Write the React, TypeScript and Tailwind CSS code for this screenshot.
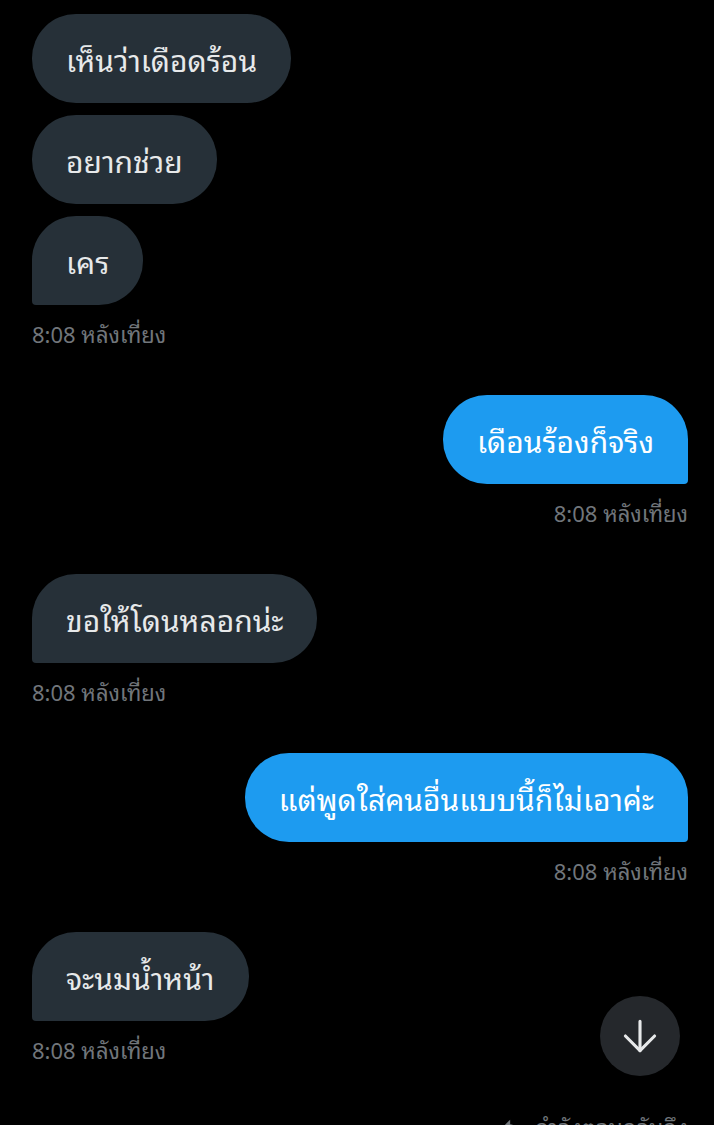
import { ArrowDown } from "lucide-react";

type Msg = { text: string };
type Group = { side: "in" | "out"; msgs: Msg[]; time: string };

const groups: Group[] = [
  {
    side: "in",
    msgs: [{ text: "เห็นว่าเดือดร้อน" }, { text: "อยากช่วย" }, { text: "เคร" }],
    time: "8:08 หลังเที่ยง",
  },
  { side: "out", msgs: [{ text: "เดือนร้องก็จริง" }], time: "8:08 หลังเที่ยง" },
  { side: "in", msgs: [{ text: "ขอให้โดนหลอกน่ะ" }], time: "8:08 หลังเที่ยง" },
  {
    side: "out",
    msgs: [{ text: "แต่พูดใส่คนอื่นแบบนี้ก็ไม่เอาค่ะ" }],
    time: "8:08 หลังเที่ยง",
  },
  { side: "in", msgs: [{ text: "จะนมน้ำหน้า" }], time: "8:08 หลังเที่ยง" },
];

function Bubble({ text, side, last }: { text: string; side: "in" | "out"; last: boolean }) {
  const base =
    "py-[24px] text-[30px] leading-[41px] rounded-[44px] whitespace-nowrap";
  if (side === "in") {
    return (
      <div className={`${base} px-[34px] bg-[#263038] text-[#e7e9ea] ${last ? "rounded-bl-[4px]" : ""}`}>
        {text}
      </div>
    );
  }
  return (
    <div className={`${base} px-[34px] bg-[#1d9bf0] text-white ${last ? "rounded-br-[4px]" : ""}`}>
      {text}
    </div>
  );
}

export default function App() {
  return (
    <div
      className="relative h-[1125px] w-[714px] overflow-hidden bg-black"
      style={{ fontFamily: '"Noto Sans Thai Looped", "Noto Sans Thai", Tahoma, "DejaVu Sans", sans-serif' }}
    >
      <div className="flex flex-col gap-[48px] pl-[32px] pr-[26px] pt-[14px]">
        {groups.map((g, gi) => (
          <div
            key={gi}
            className={`flex flex-col ${g.side === "in" ? "items-start" : "items-end"}`}
          >
            <div className={`flex flex-col gap-[12px] ${g.side === "in" ? "items-start" : "items-end"}`}>
              {g.msgs.map((m, mi) => (
                <Bubble key={mi} text={m.text} side={g.side} last={mi === g.msgs.length - 1} />
              ))}
            </div>
            <div className="mt-[14px] text-[22px] leading-[28px] text-[#71767b]">{g.time}</div>
          </div>
        ))}

        {/* replying to */}
        <div className="-mt-[1px] flex items-center justify-end gap-[10px] text-[22px] text-[#71767b]">
          <svg width="26" height="22" viewBox="0 0 24 24" fill="currentColor">
            <path d="M10 4 2 12l8 8v-5c5 0 9 1.5 12 6-1-6-5-11-12-12z" />
          </svg>
          <span>กำลังตอบกลับถึง</span>
        </div>
      </div>

      {/* scroll down */}
      <div className="absolute left-[600px] top-[996px] flex h-[80px] w-[80px] items-center justify-center rounded-full bg-[#25282c] text-[#e7e9ea]">
        <ArrowDown size={50} strokeWidth={1.5} />
      </div>
    </div>
  );
}
